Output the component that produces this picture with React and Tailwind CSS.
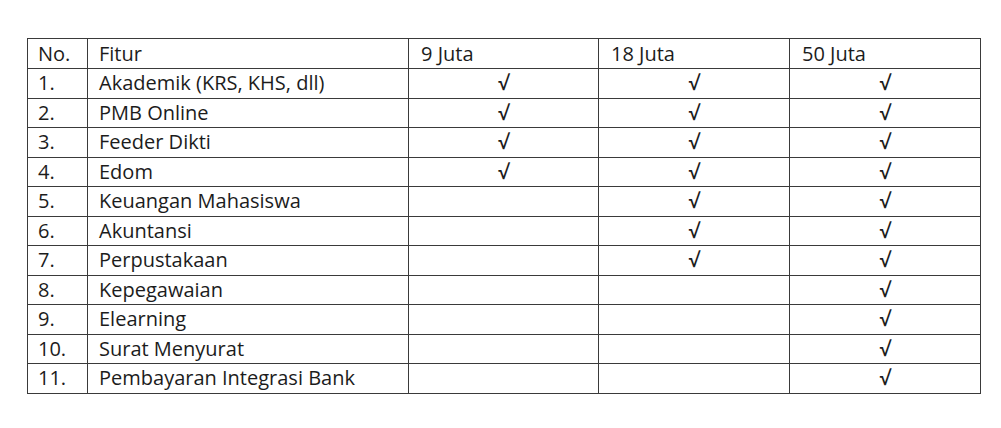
const rows = [
  ["1.", "Akademik (KRS, KHS, dll)", true, true, true],
  ["2.", "PMB Online", true, true, true],
  ["3.", "Feeder Dikti", true, true, true],
  ["4.", "Edom", true, true, true],
  ["5.", "Keuangan Mahasiswa", false, true, true],
  ["6.", "Akuntansi", false, true, true],
  ["7.", "Perpustakaan", false, true, true],
  ["8.", "Kepegawaian", false, false, true],
  ["9.", "Elearning", false, false, true],
  ["10.", "Surat Menyurat", false, false, true],
  ["11.", "Pembayaran Integrasi Bank", false, false, true],
];

function Check({ on }) {
  return (
    <td className="border border-[#3a3a3a] p-0 text-center font-semibold">
      {on ? "√" : ""}
    </td>
  );
}

export default function App() {
  return (
    <div className="h-[428px] w-[1001px] bg-white pl-[27px] pt-[38px] font-['Open_Sans',sans-serif] text-[20px] leading-none text-[#1c1c1c]">
      <table className="w-[953px] table-fixed border-collapse">
        <colgroup>
          <col className="w-[60px]" />
          <col className="w-[321px]" />
          <col className="w-[190px]" />
          <col className="w-[191px]" />
          <col className="w-[191px]" />
        </colgroup>
        <thead>
          <tr className="h-[30px]">
            <th className="border border-[#3a3a3a] pl-[10px] text-left font-normal">No.</th>
            <th className="border border-[#3a3a3a] pl-[11px] text-left font-normal">Fitur</th>
            <th className="border border-[#3a3a3a] pl-[12px] text-left font-normal">9 Juta</th>
            <th className="border border-[#3a3a3a] pl-[12px] text-left font-normal">18 Juta</th>
            <th className="border border-[#3a3a3a] pl-[12px] text-left font-normal">50 Juta</th>
          </tr>
        </thead>
        <tbody>
          {rows.map(([no, name, a, b, c]) => (
            <tr key={no} className="h-[29.5px]">
              <td className="border border-[#3a3a3a] pl-[10px]">{no}</td>
              <td className="border border-[#3a3a3a] pl-[11px]">{name}</td>
              <Check on={a} />
              <Check on={b} />
              <Check on={c} />
            </tr>
          ))}
        </tbody>
      </table>
    </div>
  );
}
